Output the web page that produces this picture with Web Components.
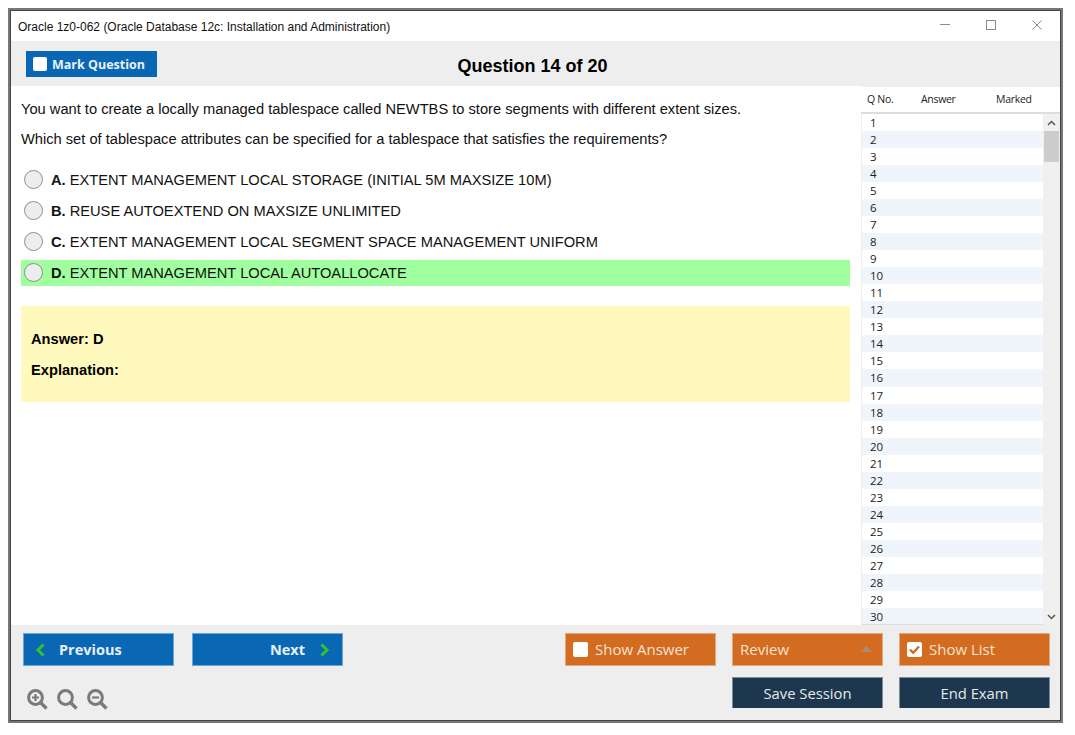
<!DOCTYPE html>
<html>
<head>
<meta charset="utf-8">
<title>Exam</title>
<style>
  html, body { margin: 0; padding: 0; background: #fff; }
  body { padding: 8px 0 0 8px; font-family: "Liberation Sans", Arial, sans-serif; }
</style>
</head>
<body>
<exam-window>
  <title-bar slot="title">Oracle 1z0-062 (Oracle Database 12c: Installation and Administration)</title-bar>
  <exam-toolbar slot="toolbar">Question 14 of 20</exam-toolbar>
  <question-pane slot="pane">
    <p>You want to create a locally managed tablespace called NEWTBS to store segments with different extent sizes.</p>
    <p>Which set of tablespace attributes can be specified for a tablespace that satisfies the requirements?</p>
    <option-row letter="A">EXTENT MANAGEMENT LOCAL STORAGE (INITIAL 5M MAXSIZE 10M)</option-row>
    <option-row letter="B">REUSE AUTOEXTEND ON MAXSIZE UNLIMITED</option-row>
    <option-row letter="C">EXTENT MANAGEMENT LOCAL SEGMENT SPACE MANAGEMENT UNIFORM</option-row>
    <option-row letter="D" correct>EXTENT MANAGEMENT LOCAL AUTOALLOCATE</option-row>
    <answer-box answer="D"></answer-box>
  </question-pane>
  <question-list slot="list" count="30"></question-list>
  <exam-footer slot="footer"></exam-footer>
</exam-window>

<script>
// 窗口外框
class ExamWindow extends HTMLElement {
  constructor() {
    super();
    this.attachShadow({ mode: 'open' });
    this.shadowRoot.innerHTML = `
      <style>
        :host {
          display: flex;
          flex-direction: column;
          box-sizing: border-box;
          width: 1055px;
          height: 715px;
          border: 2px solid #777;
          outline: 1px solid #444;
          outline-offset: -3px;
          padding: 1px;
          background: #fff;
        }
        .main { display: flex; height: 539px; }
      </style>
      <slot name="title"></slot>
      <slot name="toolbar"></slot>
      <div class="main">
        <slot name="pane"></slot>
        <slot name="list"></slot>
      </div>
      <slot name="footer"></slot>
    `;
  }
}

class TitleBar extends HTMLElement {
  constructor() {
    super();
    this.attachShadow({ mode: 'open' });
    this.shadowRoot.innerHTML = `
      <style>
        :host {
          display: flex;
          align-items: center;
          height: 30px;
          padding-left: 7px;
          background: #fff;
          color: #111;
          font: 12px "Liberation Sans", Arial, sans-serif;
        }
        .text { flex: 1; padding-top: 2px; }
        .ctl { display: flex; gap: 36px; margin-right: 18px; margin-top: -3px; }
        svg { display: block; }
      </style>
      <span class="text"><slot></slot></span>
      <div class="ctl">
        <svg width="10" height="10" viewBox="0 0 10 10"><path d="M0 4.5H10" stroke="#8a8a8a" fill="none"/></svg>
        <svg width="10" height="10" viewBox="0 0 10 10"><rect x=".5" y=".5" width="9" height="9" stroke="#8a8a8a" fill="none"/></svg>
        <svg width="10" height="10" viewBox="0 0 10 10"><path d="M.5 .5L9.5 9.5M9.5 .5L.5 9.5" stroke="#8a8a8a" fill="none"/></svg>
      </div>
    `;
  }
}

class ExamToolbar extends HTMLElement {
  constructor() {
    super();
    this.attachShadow({ mode: 'open' });
    this.shadowRoot.innerHTML = `
      <style>
        :host {
          display: grid;
          grid-template-columns: 1fr auto 1fr;
          align-items: center;
          height: 45px;
          padding: 0 21px 0 15px;
          background: #eee;
        }
        .title {
          font: bold 18px "Liberation Sans", Arial, sans-serif;
          color: #000;
          padding-top: 6px;
        }
        .mark {
          display: flex;
          align-items: center;
          gap: 5px;
          box-sizing: border-box;
          width: 131px;
          height: 26px;
          margin-top: 1px;
          padding-left: 7px;
          background: #0a67b4;
          color: #eaf2fa;
          font: bold 12.5px "Open Sans", sans-serif;
        }
        .box { width: 14px; height: 14px; border-radius: 2px; background: #fff; }
      </style>
      <div><div class="mark"><span class="box"></span>Mark Question</div></div>
      <div class="title"><slot></slot></div>
      <div></div>
    `;
  }
}

class QuestionPane extends HTMLElement {
  constructor() {
    super();
    this.attachShadow({ mode: 'open' });
    this.shadowRoot.innerHTML = `
      <style>
        :host {
          display: block;
          box-sizing: border-box;
          width: 850px;
          padding: 15px 11px 0 10px;
          background: #fff;
          color: #111;
          font: 14.67px "Liberation Sans", Arial, sans-serif;
        }
        ::slotted(p) { margin: 0 0 13px 0; line-height: 17px; }
        ::slotted(p:nth-of-type(2)) { margin-bottom: 19px; }
      </style>
      <slot></slot>
    `;
  }
}

// 选项行
class OptionRow extends HTMLElement {
  constructor() {
    super();
    this.attachShadow({ mode: 'open' });
    this.shadowRoot.innerHTML = `
      <style>
        :host {
          display: flex;
          align-items: center;
          height: 26px;
          margin-bottom: 5px;
          padding-left: 3px;
          color: #111;
        }
        :host([correct]) { background: #a0ff9f; }
        .radio {
          box-sizing: border-box;
          width: 19px;
          height: 19px;
          margin: -1px 8px 0 0;
          border: 1px solid #8f8f8f;
          border-radius: 50%;
          background: #ededed;
        }
        b { margin-right: 4px; }
      </style>
      <span class="radio"></span><b>${this.getAttribute('letter')}.</b><span><slot></slot></span>
    `;
  }
}

class AnswerBox extends HTMLElement {
  constructor() {
    super();
    this.attachShadow({ mode: 'open' });
    this.shadowRoot.innerHTML = `
      <style>
        :host {
          display: block;
          box-sizing: border-box;
          height: 96px;
          margin-top: 20px;
          padding: 25px 10px 0 10px;
          background: #fff9bd;
          color: #000;
          font-weight: bold;
        }
        div { line-height: 17px; margin-bottom: 14px; }
      </style>
      <div>Answer: ${this.getAttribute('answer')}</div>
      <div>Explanation:</div>
    `;
  }
}

// 右侧题号列表
class QuestionList extends HTMLElement {
  constructor() {
    super();
    this.attachShadow({ mode: 'open' });
    const count = parseInt(this.getAttribute('count') || '0', 10);
    let rows = '';
    for (let i = 1; i <= count; i++) {
      rows += `<div class="row${i % 2 === 0 ? ' alt' : ''}">${i}</div>`;
    }
    this.shadowRoot.innerHTML = `
      <style>
        :host {
          display: flex;
          flex-direction: column;
          width: 199px;
          background: #eee;
          font: 10.5px "Open Sans", sans-serif;
          color: #222;
        }
        .head {
          display: grid;
          grid-template-columns: 54px 75px 1fr;
          align-items: center;
          box-sizing: border-box;
          height: 28px;
          margin-top: 1px;
          padding: 0 0 2px 6px;
          background: #fff;
          border-bottom: 2px solid #ddd;
          letter-spacing: -0.3px;
        }
        .body { display: flex; height: 511px; }
        .rows { width: 181px; height: 510px; overflow: hidden; background: #fff; border-bottom: 1px solid #ddd; margin-left: 1px; }
        .row { height: 17.04px; line-height: 17px; padding-left: 8px; font-size: 11.5px; letter-spacing: -0.2px; }
        .alt { background: #eff5fa; }
        .bar { display: flex; flex-direction: column; align-items: center; flex: 1; background: #f0f0f0; }
        .arrow { flex: none; height: 17px; display: flex; align-items: center; justify-content: center; }
        .thumb { width: 15px; height: 31px; background: #cdcdcd; flex: none; }
        .gap { flex: 1; }
      </style>
      <div class="head"><span>Q No.</span><span>Answer</span><span>Marked</span></div>
      <div class="body">
        <div class="rows">${rows}</div>
        <div class="bar">
          <div class="arrow"><svg width="9" height="6" viewBox="0 0 9 6"><path d="M1 5L4.5 1.5L8 5" stroke="#555" stroke-width="1.5" fill="none"/></svg></div>
          <div class="thumb"></div>
          <div class="gap"></div>
          <div class="arrow"><svg width="9" height="6" viewBox="0 0 9 6"><path d="M1 1L4.5 4.5L8 1" stroke="#555" stroke-width="1.5" fill="none"/></svg></div>
        </div>
      </div>
    `;
  }
}

// 底部按钮
class ExamButton extends HTMLElement {
  constructor() {
    super();
    this.attachShadow({ mode: 'open' });
    this.shadowRoot.innerHTML = `
      <style>
        :host {
          display: flex;
          align-items: center;
          gap: 7px;
          box-sizing: border-box;
          height: 33px;
          padding: 0 7px;
          border: 1px solid #6fa6d8;
          background: #0a67b4;
          color: #e8f0f8;
          font: bold 14.5px "Open Sans", sans-serif;
        }
        :host([tone="orange"]) {
          padding-bottom: 2px;
          background: #d36b20;
          border-color: #e5a77c;
          color: #f6e3d4;
          font-weight: normal;
          font-size: 15px;
        }
        :host([tone="navy"]) {
          height: 31px;
          justify-content: center;
          background: #1d374e;
          border-color: #7b8b99;
          border-bottom: 0;
          color: #e4e9ed;
          font-weight: normal;
          font-size: 14.8px;
        }
        :host([align="end"]) { justify-content: flex-end; }
        .box {
          display: flex;
          width: 15px;
          height: 15px;
          margin-top: 2px;
          border-radius: 2px;
          background: #fff;
        }
        .grow { flex: 1; }
        .chev { display: flex; }
      </style>
      ${this.innerMarkup()}
    `;
  }

  innerMarkup() {
    const icon = this.getAttribute('icon');
    const chevL = `<svg width="11" height="14" viewBox="0 0 11 14"><path d="M8.5 1.5L3 7L8.5 12.5" stroke="#2fc52f" stroke-width="3" fill="none"/></svg>`;
    const chevR = `<svg width="11" height="14" viewBox="0 0 11 14"><path d="M2.5 1.5L8 7L2.5 12.5" stroke="#2fc52f" stroke-width="3" fill="none"/></svg>`;
    if (icon === 'prev') return `<span class="chev" style="margin-left:4px">${chevL}</span><span style="margin-left:6px"><slot></slot></span>`;
    if (icon === 'next') return `<slot></slot><span class="chev" style="margin-left:7px;margin-right:5px">${chevR}</span>`;
    if (icon === 'box') return `<span class="box"></span><slot></slot>`;
    if (icon === 'check') return `<span class="box"><svg width="15" height="15" viewBox="0 0 15 15"><path d="M3 7.5L6.2 10.8L12 4.5" stroke="#d36b20" stroke-width="2.4" fill="none"/></svg></span><slot></slot>`;
    if (icon === 'caret') return `<slot></slot><span class="grow"></span><svg width="11" height="6" viewBox="0 0 11 6" style="margin-right:3px"><path d="M5.5 0L11 6H0Z" fill="#b08a70"/></svg>`;
    return `<slot></slot>`;
  }
}

class ZoomIcons extends HTMLElement {
  constructor() {
    super();
    this.attachShadow({ mode: 'open' });
    const lens = (inner) => `
      <svg width="21" height="21" viewBox="0 0 21 21">
        <circle cx="8.5" cy="8.5" r="6.9" stroke="#7a7a7a" stroke-width="3" fill="none"/>
        <path d="M13.5 13.5L19.5 19.5" stroke="#7a7a7a" stroke-width="3.4" fill="none"/>
        ${inner}
      </svg>`;
    this.shadowRoot.innerHTML = `
      <style>
        :host { display: flex; gap: 9px; padding: 12px 0 0 4px; }
        svg { display: block; }
      </style>
      ${lens('<path d="M5 8.5H12M8.5 5V12" stroke="#7a7a7a" stroke-width="2.2"/>')}
      ${lens('')}
      ${lens('<path d="M5 8.5H12" stroke="#7a7a7a" stroke-width="2.2"/>')}
    `;
  }
}

class ExamFooter extends HTMLElement {
  constructor() {
    super();
    this.attachShadow({ mode: 'open' });
    this.shadowRoot.innerHTML = `
      <style>
        :host {
          display: grid;
          grid-template-columns: 151px 18px 151px 1fr 151px 16px 151px 16px 151px;
          grid-template-rows: 33px 31px;
          row-gap: 11px;
          height: 95px;
          box-sizing: border-box;
          padding: 8px 10px 0 12px;
          background: #eee;
        }
        .prev { grid-column: 1; }
        .next { grid-column: 3; }
        .show { grid-column: 5; }
        .review { grid-column: 7; }
        .list { grid-column: 9; }
        .zoom { grid-column: 1; grid-row: 2; }
        .save { grid-column: 7; grid-row: 2; }
        .end { grid-column: 9; grid-row: 2; }
      </style>
      <exam-button class="prev" icon="prev">Previous</exam-button>
      <exam-button class="next" icon="next" align="end">Next</exam-button>
      <exam-button class="show" tone="orange" icon="box">Show Answer</exam-button>
      <exam-button class="review" tone="orange" icon="caret">Review</exam-button>
      <exam-button class="list" tone="orange" icon="check">Show List</exam-button>
      <zoom-icons class="zoom"></zoom-icons>
      <exam-button class="save" tone="navy">Save Session</exam-button>
      <exam-button class="end" tone="navy">End Exam</exam-button>
    `;
  }
}

customElements.define('exam-button', ExamButton);
customElements.define('zoom-icons', ZoomIcons);
customElements.define('exam-footer', ExamFooter);
customElements.define('title-bar', TitleBar);
customElements.define('exam-toolbar', ExamToolbar);
customElements.define('option-row', OptionRow);
customElements.define('answer-box', AnswerBox);
customElements.define('question-pane', QuestionPane);
customElements.define('question-list', QuestionList);
customElements.define('exam-window', ExamWindow);
</script>
</body>
</html>
